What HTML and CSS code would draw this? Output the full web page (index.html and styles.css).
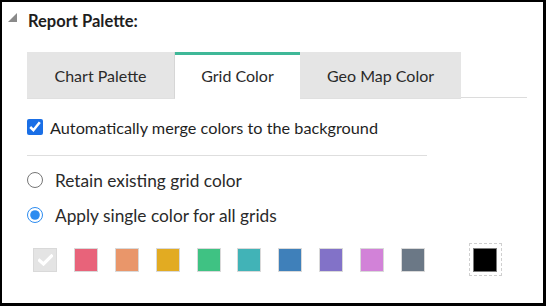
FILE: index.html
```html
<!DOCTYPE html>
<html>
<head>
<meta charset="utf-8">
<link rel="stylesheet" href="styles.css">
</head>
<body>
<div class="panel">
  <div class="header">
    <span class="tri"></span>
    <span class="title">Report Palette:</span>
  </div>
  <div class="tabs">
    <div class="tab">Chart Palette</div>
    <div class="tab active">Grid Color</div>
    <div class="tab">Geo Map Color</div>
    <div class="tab-rest"></div>
  </div>
  <label class="check-row">
    <input type="checkbox" class="chk" checked>
    <span>Automatically merge colors to the background</span>
  </label>
  <div class="divider"></div>
  <label class="radio-row">
    <input type="radio" name="g" class="rad">
    <span>Retain existing grid color</span>
  </label>
  <label class="radio-row second">
    <input type="radio" name="g" class="rad" checked>
    <span>Apply single color for all grids</span>
  </label>
  <div class="swatches">
    <div class="sw sw-none">
      <svg width="15" height="12" viewBox="0 0 15 12"><path d="M1.5 6.5 L5.5 10 L13.5 2" fill="none" stroke="#fff" stroke-width="3.2" stroke-linecap="square"/></svg>
    </div>
    <div class="sw" style="background:#e8637a"></div>
    <div class="sw" style="background:#e9966a"></div>
    <div class="sw" style="background:#e2ab22"></div>
    <div class="sw" style="background:#3fc283"></div>
    <div class="sw" style="background:#41b3b7"></div>
    <div class="sw" style="background:#3f80ba"></div>
    <div class="sw" style="background:#8272c8"></div>
    <div class="sw" style="background:#d282d8"></div>
    <div class="sw" style="background:#6b7886"></div>
    <div class="custom">
      <div class="black"></div>
    </div>
  </div>
</div>
</body>
</html>
```
FILE: styles.css
```css
* { box-sizing: border-box; }
html, body { margin: 0; padding: 0; background: #fff; }
body {
  font-family: Lato, "Open Sans", sans-serif;
  color: #222;
}
.panel {
  width: 546px;
  height: 306px;
  border-style: solid;
  border-color: #000;
  border-width: 2px 3px 3px 2px;
  padding: 0 0 0 25px;
  position: relative;
}
.header {
  display: flex;
  align-items: center;
  height: 37px;
  padding-top: 1px;
}
.tri {
  position: absolute;
  left: 6px;
  top: 11px;
  width: 0;
  height: 0;
  border-style: solid;
  border-width: 0 0 9px 9px;
  border-color: transparent transparent #8a8a8a transparent;
}
.title {
  font-weight: 700;
  font-size: 16.5px;
  margin-left: 1px;
  color: #1e1e1e;
}
.tabs {
  display: flex;
  margin-top: 13px;
  height: 47px;
  width: 500px;
}
.tab {
  background: #e5e5e5;
  font-size: 16px;
  color: #2a2a2a;
  display: flex;
  align-items: center;
  justify-content: center;
  height: 47px;
  border-bottom: 1px solid #e0e0e0;
}
.tab:nth-child(1) { width: 148px; border-right: 1px solid #d6d6d6; }
.tab:nth-child(2) { width: 125px; }
.tab:nth-child(3) { width: 161px; }
.tab.active {
  background: #fff;
  box-shadow: inset 0 3px 0 #3fb898;
  border-bottom: none;
}
.tab-rest {
  flex: 1;
  border-bottom: 1px solid #dcdcdc;
  height: 46px;
}
.check-row {
  display: flex;
  align-items: center;
  margin-top: 19px;
  height: 18px;
  font-size: 16.25px;
  color: #1f1f1f;
}
.chk {
  margin: 0 7px 0 0;
  width: 16px;
  height: 16px;
  accent-color: #1a6fe6;
}
.divider {
  width: 400px;
  height: 1px;
  background: #dedede;
  margin-top: 19px;
}
.radio-row {
  display: flex;
  align-items: center;
  height: 18px;
  margin-top: 15px;
  font-size: 17.3px;
  color: #2a2a2a;
}
.radio-row.second { margin-top: 17px; }
.rad {
  margin: 0 12px 0 0;
  width: 16px;
  height: 16px;
  accent-color: #2d8cf0;
}
.swatches {
  display: flex;
  align-items: center;
  margin-top: 19px;
  padding-left: 6px;
}
.sw {
  width: 24px;
  height: 24px;
  border: 1px solid #d9d9d9;
  margin-right: 16.9px;
  display: flex;
  align-items: center;
  justify-content: center;
}
.sw-none { background: #e4e4e4; }
.custom {
  margin-left: 27px;
  width: 33px;
  height: 33px;
  border: 1px dashed #cfcfcf;
  display: flex;
  align-items: center;
  justify-content: center;
}
.black {
  width: 24px;
  height: 24px;
  background: #000;
  border: 1px solid #7a7a7a;
}
```
